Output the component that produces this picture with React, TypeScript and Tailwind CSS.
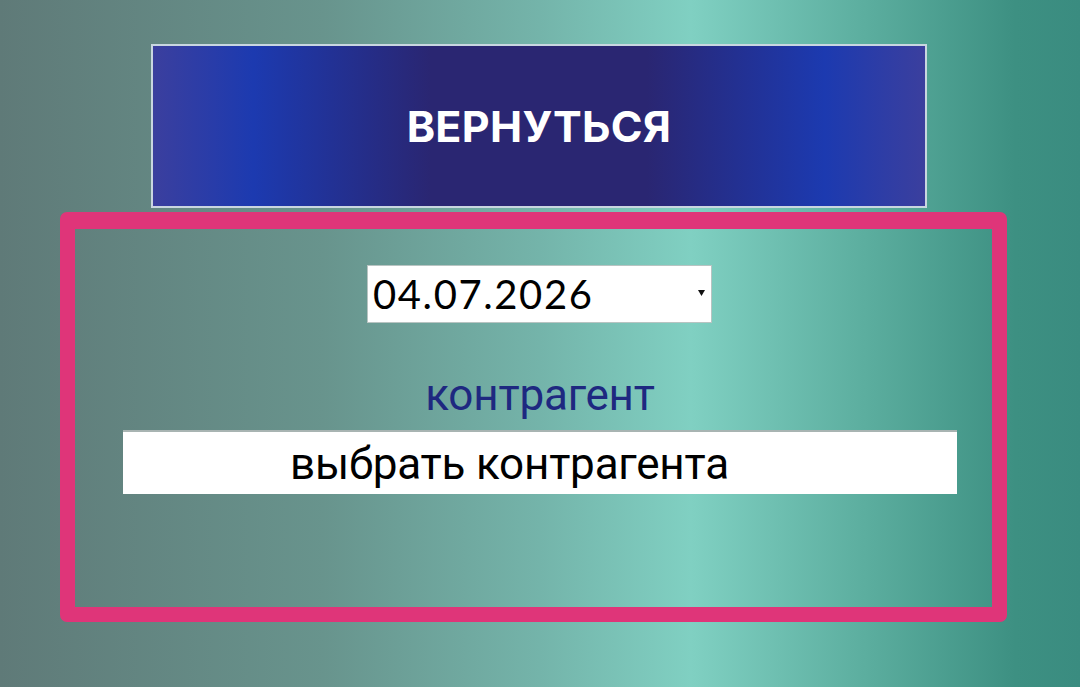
export default function App() {
  return (
    <div className="w-[1080px] h-[687px] overflow-hidden bg-[linear-gradient(to_right,#5f7a78_0%,#68948d_30%,#74b4aa_50%,#80d0c2_64%,#5cae9f_80%,#3d9082_94%,#3a8c80_100%)] font-['Roboto','Noto_Sans',sans-serif]">
      <div className="pt-[44px] pl-[151px]">
        <button
          type="button"
          className="w-[776px] h-[164px] flex items-center justify-center border-2 border-[#c9d6e0] bg-[linear-gradient(to_right,#3b3f9e_0%,#1c3ab0_13%,#2a2672_36%,#2a2672_64%,#1c3ab0_87%,#3b3f9e_100%)] text-white text-[43px] font-bold tracking-[0.3px] font-['Inter','Open_Sans',sans-serif]"
        >
          ВЕРНУТЬСЯ
        </button>
      </div>

      <div className="ml-[60px] mt-[4px] w-[947px] h-[410px] border-[15px] border-t-[17px] border-[#df3579] rounded-[7px] flex flex-col items-center">
        <div className="mt-[36px] ml-[12px] w-[345px] h-[58px] bg-white border border-[#b8c4c2] flex items-center justify-between pl-[5px] pr-[6px]">
          <span className="text-[40px] text-black leading-none font-['Lato','Noto_Sans',sans-serif] tracking-[1.6px]">04.07.2026</span>
          <svg width="7" height="6" viewBox="0 0 7 6" className="mb-[2px]">
            <path d="M0 0 L7 0 L3.5 6 Z" fill="#111" />
          </svg>
        </div>

        <div className="mt-[50px] ml-[13px] text-[44px] leading-none text-[#1e2880] tracking-[-0.2px]">контрагент</div>

        <div className="mt-[13px] ml-[13px] w-[834px] h-[64px] bg-white border-t-2 border-[#a8b4b2] flex items-center pl-[167px] pt-[2px]">
          <span className="text-[44px] leading-none text-black tracking-[-0.2px]">выбрать контрагента</span>
        </div>
      </div>
    </div>
  );
}
